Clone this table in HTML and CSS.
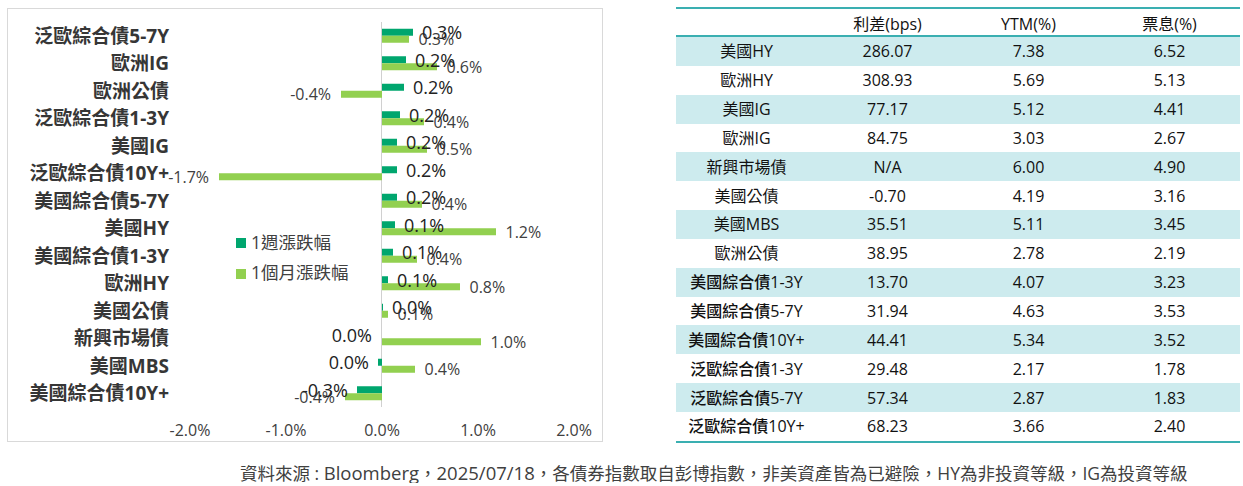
FILE: index.html
```html
<!DOCTYPE html>
<html lang="zh-Hant">
<head>
<meta charset="utf-8">
<title>債券指數表現</title>
<link rel="stylesheet" href="styles.css">
</head>
<body>
<div class="page">
  <div class="chart">
    <svg width="594" height="432" viewBox="8 9 594 432" xmlns="http://www.w3.org/2000/svg">
      <line class="axis" x1="381.5" y1="22" x2="381.5" y2="407"/>
      <g class="cats">
        <text x="169" y="35.75">泛歐綜合債5-7Y</text>
        <text x="169" y="63.25">歐洲IG</text>
        <text x="169" y="90.75">歐洲公債</text>
        <text x="169" y="118.25">泛歐綜合債1-3Y</text>
        <text x="169" y="145.75">美國IG</text>
        <text x="169" y="173.25">泛歐綜合債10Y+</text>
        <text x="169" y="200.75">美國綜合債5-7Y</text>
        <text x="169" y="228.25">美國HY</text>
        <text x="169" y="255.75">美國綜合債1-3Y</text>
        <text x="169" y="283.25">歐洲HY</text>
        <text x="169" y="310.75">美國公債</text>
        <text x="169" y="338.25">新興市場債</text>
        <text x="169" y="365.75">美國MBS</text>
        <text x="169" y="393.25">美國綜合債10Y+</text>
      </g>
      <g class="wk">
        <rect x="382" y="28.75" width="31" height="7"/>
        <rect x="382" y="56.25" width="24" height="7"/>
        <rect x="382" y="83.75" width="22" height="7"/>
        <rect x="382" y="111.25" width="18" height="7"/>
        <rect x="382" y="138.75" width="15" height="7"/>
        <rect x="382" y="166.25" width="15" height="7"/>
        <rect x="382" y="193.75" width="15" height="7"/>
        <rect x="382" y="221.25" width="13" height="7"/>
        <rect x="382" y="248.75" width="11" height="7"/>
        <rect x="382" y="276.25" width="6" height="7"/>
        <rect x="382" y="303.75" width="1" height="7"/>
        <rect x="378" y="358.75" width="4" height="7"/>
        <rect x="357" y="386.25" width="25" height="7"/>
      </g>
      <g class="mo">
        <rect x="382" y="35.75" width="27" height="7"/>
        <rect x="382" y="63.25" width="55" height="7"/>
        <rect x="341" y="90.75" width="41" height="7"/>
        <rect x="382" y="118.25" width="42" height="7"/>
        <rect x="382" y="145.75" width="45" height="7"/>
        <rect x="219" y="173.25" width="163" height="7"/>
        <rect x="382" y="200.75" width="40" height="7"/>
        <rect x="382" y="228.25" width="114" height="7"/>
        <rect x="382" y="255.75" width="35" height="7"/>
        <rect x="382" y="283.25" width="78" height="7"/>
        <rect x="382" y="310.75" width="6" height="7"/>
        <rect x="382" y="338.25" width="99" height="7"/>
        <rect x="382" y="365.75" width="33" height="7"/>
        <rect x="345" y="393.25" width="37" height="7"/>
      </g>
      <g class="mo-lbl">
        <text x="418.5" y="39.25">0.3%</text>
        <text x="446.5" y="66.75">0.6%</text>
        <text class="neg" x="331" y="94.25">-0.4%</text>
        <text x="433.5" y="121.75">0.4%</text>
        <text x="436.5" y="149.25">0.5%</text>
        <text class="neg" x="209" y="176.75">-1.7%</text>
        <text x="431.5" y="204.25">0.4%</text>
        <text x="505.5" y="231.75">1.2%</text>
        <text x="426.5" y="259.25">0.4%</text>
        <text x="469.5" y="286.75">0.8%</text>
        <text x="397.5" y="314.25">0.1%</text>
        <text x="490.5" y="341.75">1.0%</text>
        <text x="424.5" y="369.25">0.4%</text>
        <text class="neg" x="335" y="396.75">-0.4%</text>
      </g>
      <g class="wk-lbl">
        <text x="422" y="32.25">0.3%</text>
        <text x="415" y="59.75">0.2%</text>
        <text x="413" y="87.25">0.2%</text>
        <text x="409" y="114.75">0.2%</text>
        <text x="406" y="142.25">0.2%</text>
        <text x="406" y="169.75">0.2%</text>
        <text x="406" y="197.25">0.2%</text>
        <text x="404" y="224.75">0.1%</text>
        <text x="402" y="252.25">0.1%</text>
        <text x="397" y="279.75">0.1%</text>
        <text x="392" y="307.25">0.0%</text>
        <text class="neg" x="372" y="334.75">0.0%</text>
        <text class="neg" x="369" y="362.25">0.0%</text>
        <text class="neg" x="348" y="389.75">-0.3%</text>
      </g>
      <g class="ticks">
        <text x="190" y="430">-2.0%</text>
        <text x="286" y="430">-1.0%</text>
        <text x="382" y="430">0.0%</text>
        <text x="478" y="430">1.0%</text>
        <text x="574" y="430">2.0%</text>
      </g>
      <g class="legend">
        <rect class="sw-wk" x="236" y="238" width="10" height="10"/>
        <text x="251" y="242">1週漲跌幅</text>
        <rect class="sw-mo" x="236" y="269" width="10" height="10"/>
        <text x="251" y="272">1個月漲跌幅</text>
      </g>
    </svg>
  </div>

  <div class="table">
    <div class="row head"><span></span><span>利差(bps)</span><span>YTM(%)</span><span>票息(%)</span></div>
    <div class="row alt"><span>美國HY</span><span>286.07</span><span>7.38</span><span>6.52</span></div>
    <div class="row"><span>歐洲HY</span><span>308.93</span><span>5.69</span><span>5.13</span></div>
    <div class="row alt"><span>美國IG</span><span>77.17</span><span>5.12</span><span>4.41</span></div>
    <div class="row"><span>歐洲IG</span><span>84.75</span><span>3.03</span><span>2.67</span></div>
    <div class="row alt"><span>新興市場債</span><span>N/A</span><span>6.00</span><span>4.90</span></div>
    <div class="row"><span>美國公債</span><span>-0.70</span><span>4.19</span><span>3.16</span></div>
    <div class="row alt"><span>美國MBS</span><span>35.51</span><span>5.11</span><span>3.45</span></div>
    <div class="row"><span>歐洲公債</span><span>38.95</span><span>2.78</span><span>2.19</span></div>
    <div class="row alt"><span class="nm">美國綜合債1-3Y</span><span>13.70</span><span>4.07</span><span>3.23</span></div>
    <div class="row"><span class="nm">美國綜合債5-7Y</span><span>31.94</span><span>4.63</span><span>3.53</span></div>
    <div class="row alt"><span class="nm">美國綜合債10Y+</span><span>44.41</span><span>5.34</span><span>3.52</span></div>
    <div class="row"><span class="nm">泛歐綜合債1-3Y</span><span>29.48</span><span>2.17</span><span>1.78</span></div>
    <div class="row alt"><span class="nm">泛歐綜合債5-7Y</span><span>57.34</span><span>2.87</span><span>1.83</span></div>
    <div class="row"><span class="nm">泛歐綜合債10Y+</span><span>68.23</span><span>3.66</span><span>2.40</span></div>
  </div>
</div>
<p class="note">資料來源 : <span class="lat">Bloomberg</span>，<span class="lat">2025/07/18</span>，各債券指數取自彭博指數，非美資產皆為已避險，HY為非投資等級，IG為投資等級</p>
</body>
</html>
```

FILE: styles.css
```css
html, body {
  margin: 0;
  padding: 0;
  background: #ffffff;
}

body {
  font-family: "Open Sans", "Noto Sans CJK TC", sans-serif;
  color: #111111;
}

.page {
  display: flex;
  align-items: flex-start;
  gap: 73px;
  padding: 7px 0 0 7px;
}

.chart {
  width: 596px;
  height: 434px;
  box-sizing: border-box;
  border: 1px solid #d9d9d9;
  margin-top: 1px;
}

.chart svg {
  display: block;
}

.chart text {
  dominant-baseline: central;
}

.axis {
  stroke: #d0d0d0;
  stroke-width: 1;
}

.cats text {
  font-family: "Open Sans", "Noto Sans CJK TC", sans-serif;
  font-size: 19px;
  font-weight: 700;
  fill: #363636;
  text-anchor: end;
}

.wk rect,
.sw-wk {
  fill: #00a66e;
}

.mo rect,
.sw-mo {
  fill: #92d050;
}

.wk-lbl text {
  font-size: 18px;
  font-weight: 500;
  fill: #222222;
}

.mo-lbl text {
  font-size: 16px;
  fill: #404040;
}

.wk-lbl text.neg,
.mo-lbl text.neg {
  text-anchor: end;
}

.ticks text {
  font-size: 16px;
  fill: #404040;
  text-anchor: middle;
}

.legend text {
  font-size: 17.5px;
  fill: #404040;
}

.table {
  width: 564px;
  border-top: 2px solid #3aafb1;
  border-bottom: 2px solid #3aafb1;
}

.row {
  display: grid;
  grid-template-columns: repeat(4, 1fr);
  align-items: center;
  height: 28.857px;
  text-align: center;
  font-size: 16px;
  line-height: 20px;
  color: #111111;
}

.row.head {
  box-sizing: border-box;
  height: 28px;
  padding-top: 4px;
  border-bottom: 2px solid #3aafb1;
}

.row.alt {
  background: #cdebee;
}

.row .nm {
  font-weight: 500;
}

.note {
  margin: 20px 0 0 0;
  padding-left: 240px;
  font-size: 17.5px;
  line-height: 20px;
  color: #404040;
  white-space: nowrap;
}

.note .lat {
  font-size: 18.5px;
}
```
